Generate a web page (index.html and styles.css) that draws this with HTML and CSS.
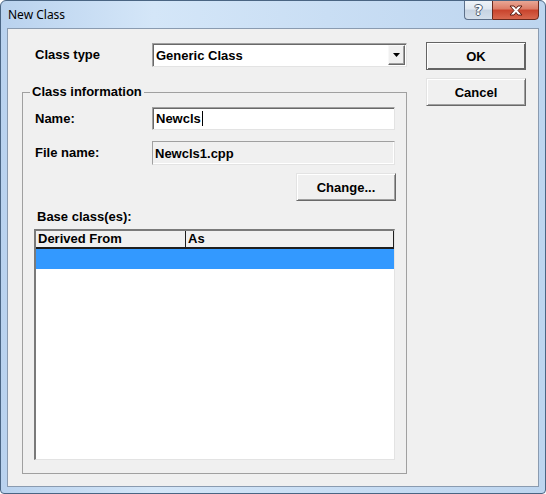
FILE: index.html
```html
<!DOCTYPE html>
<html lang="en">
  <head>
    <meta charset="UTF-8" />
    <title>New Class</title>
    <link rel="stylesheet" href="styles.css">
  </head>
  <body>
    <div class="window">
      <div class="titlebar">
        <span class="title">New Class</span>
        <div class="captionBtns">
          <span class="cap help">?</span>
          <span class="cap close">
            <svg width="14" height="11" viewBox="0 0 14 11">
              <path d="M1 1h4l2 2.5L9 1h4L9 5.5l4 4.5H9L7 7.5 5 10H1l4-4.5z" fill="#fff" stroke="#5a1a10" stroke-width="1"/>
            </svg>
          </span>
        </div>
      </div>
      <div class="client">
        <div class="mainCol">
          <div class="typeRow">
            <span class="lbl">Class type</span>
            <div class="combo">
              <span class="val">Generic Class</span>
              <span class="drop">
                <svg width="7" height="4" viewBox="0 0 7 4"><path d="M0 0h7L3.5 4z" fill="#000"/></svg>
              </span>
            </div>
          </div>
          <fieldset class="group">
            <legend>Class information</legend>
            <div class="fieldRow nameRow">
              <span class="lbl">Name:</span>
              <div class="edit">Newcls<span class="caret"></span></div>
            </div>
            <div class="fieldRow fileRow">
              <span class="lbl">File name:</span>
              <div class="edit readonly">Newcls1.cpp</div>
            </div>
            <div class="changeRow">
              <button class="btn">Change...</button>
            </div>
            <div class="baseLabel">Base class(es):</div>
            <div class="list">
              <div class="listHead">
                <span class="col1">Derived From</span>
                <span class="col2">As</span>
              </div>
              <div class="listRow selected"></div>
            </div>
          </fieldset>
        </div>
        <div class="sideCol">
          <button class="btn default">OK</button>
          <button class="btn">Cancel</button>
        </div>
      </div>
    </div>
  </body>
</html>
```

FILE: styles.css
```css
body {
  margin: 0;
  background-color: #ffffff;
}
.window {
  width: 546px;
  height: 494px;
  box-sizing: border-box;
  border: 1px solid #4a6583;
  border-radius: 6px 6px 4px 4px;
  background: linear-gradient(90deg, #b9d2ee 0%, #d4e6f8 28%, #c9def4 60%, #bdd5ef 100%);
  display: flex;
  flex-direction: column;
  overflow: hidden;
}
.titlebar {
  height: 27px;
  display: flex;
  align-items: flex-start;
}
.title {
  font-family: "Noto Sans", "DejaVu Sans", sans-serif;
  font-size: 12px;
  line-height: 17px;
  padding: 5px 0 0 7px;
  color: #000000;
}
.captionBtns {
  margin-left: auto;
  margin-right: 6px;
  display: flex;
  margin-top: -1px;
}
.cap {
  height: 20px;
  box-sizing: border-box;
  display: flex;
  align-items: center;
  justify-content: center;
}
.cap.help {
  width: 28px;
  border: 1px solid #5d708a;
  border-right: none;
  border-radius: 0 0 0 4px;
  background: linear-gradient(#eef3f8 0%, #dfe7f0 45%, #c6d3e2 50%, #d3dfec 100%);
  font-family: "DejaVu Sans", sans-serif;
  font-weight: bold;
  font-size: 14px;
  color: #ffffff;
  text-shadow: 1px 0 0 #4b5a6c, -1px 0 0 #4b5a6c, 0 1px 0 #4b5a6c, 0 -1px 0 #4b5a6c;
}
.cap.close {
  width: 47px;
  border: 1px solid #6a2a1e;
  border-radius: 0 0 4px 0;
  background: linear-gradient(#e9a795 0%, #dc7b66 45%, #c8432c 50%, #d8684f 100%);
}
.client {
  flex: 1;
  margin: 0 6px 6px;
  border: 1px solid #8a9bb0;
  background-color: #f0f0f0;
  display: flex;
  padding: 13px 0 0 14px;
  font-family: "Liberation Sans", Arial, sans-serif;
  font-weight: bold;
  font-size: 13px;
  color: #000000;
}
.mainCol {
  width: 385px;
  display: flex;
  flex-direction: column;
}
.lbl {
  padding-left: 1px;
  line-height: 16px;
}
.typeRow {
  margin-top: 1px;
  height: 24px;
  display: grid;
  grid-template-columns: 130px 255px;
  align-items: center;
}
.typeRow > .lbl {
  padding-left: 13px;
}
.combo {
  height: 24px;
  box-sizing: border-box;
  border: 1px solid;
  border-color: #a0a0a0 #e3e3e3 #e3e3e3 #a0a0a0;
  box-shadow: inset 1px 1px 0 #696969;
  background-color: #ffffff;
  display: flex;
  align-items: center;
  padding-left: 3px;
}
.drop {
  margin: 1px 1px 1px auto;
  width: 17px;
  height: 20px;
  box-sizing: border-box;
  border: 1px solid;
  border-color: #f8f8f8 #696969 #696969 #f8f8f8;
  box-shadow: inset -1px -1px 0 #a0a0a0;
  background-color: #f0f0f0;
  display: flex;
  align-items: center;
  justify-content: center;
}
.group {
  margin: 17px 0 0 0;
  padding: 0 0 13px 0;
  min-inline-size: 0;
  width: 385px;
  box-sizing: border-box;
  border: 1px solid #a0a0a0;
  display: flex;
  flex-direction: column;
}
.group > legend {
  margin-left: 7px;
  padding: 0 2px;
  line-height: 16px;
}
.group > div {
  margin-left: 11px;
  margin-right: 11px;
}
.fieldRow {
  display: grid;
  grid-template-columns: 118px 243px;
  align-items: center;
}
.nameRow {
  margin-top: 7px;
  height: 23px;
}
.fileRow {
  margin-top: 11px;
  height: 24px;
}
.edit {
  height: 100%;
  box-sizing: border-box;
  border: 1px solid;
  border-color: #a0a0a0 #e3e3e3 #e3e3e3 #a0a0a0;
  box-shadow: inset 1px 1px 0 #696969;
  background-color: #ffffff;
  display: flex;
  align-items: center;
  padding-left: 3px;
}
.edit.readonly {
  background-color: #f0f0f0;
  box-shadow: inset -1px -1px 0 #ffffff;
  padding-left: 2px;
}
.caret {
  display: inline-block;
  width: 1px;
  height: 15px;
  background-color: #000000;
  margin-left: 1px;
}
.changeRow {
  margin-top: 8px;
  display: flex;
  justify-content: flex-end;
}
.btn {
  width: 100px;
  height: 28px;
  box-sizing: border-box;
  background-color: #f0f0f0;
  border: 1px solid;
  border-color: #e3e3e3 #696969 #696969 #e3e3e3;
  box-shadow: inset 1px 1px 0 #ffffff, inset -1px -1px 0 #a0a0a0;
  font-family: "Liberation Sans", Arial, sans-serif;
  font-weight: bold;
  font-size: 13px;
  color: #000000;
  padding: 0;
}
.btn.default {
  border-color: #646464;
  box-shadow: inset 1px 1px 0 #ffffff, inset -1px -1px 0 #646464;
}
.changeRow > .btn {
  margin-right: -1px;
}
.baseLabel {
  margin-top: 8px;
  line-height: 16px;
  padding-left: 3px;
}
.list {
  margin-top: 4px;
  height: 231px;
  box-sizing: border-box;
  border-style: solid;
  border-width: 2px 1px 1px 2px;
  border-color: #7a7a7a #e3e3e3 #e3e3e3 #7a7a7a;
  background-color: #ffffff;
}
.listHead {
  height: 18px;
  box-sizing: border-box;
  border-bottom: 2px solid #1e1e1e;
  background-color: #f0f0f0;
  display: flex;
}
.listHead > span {
  line-height: 16px;
  padding-left: 2px;
  box-sizing: border-box;
  border-right: 1px solid #1e1e1e;
}
.col1 {
  width: 150px;
}
.col2 {
  flex: 1;
}
.listRow {
  height: 20px;
}
.listRow.selected {
  background-color: #3399ff;
}
.sideCol {
  margin-left: 19px;
  display: flex;
  flex-direction: column;
  gap: 8px;
}
```
